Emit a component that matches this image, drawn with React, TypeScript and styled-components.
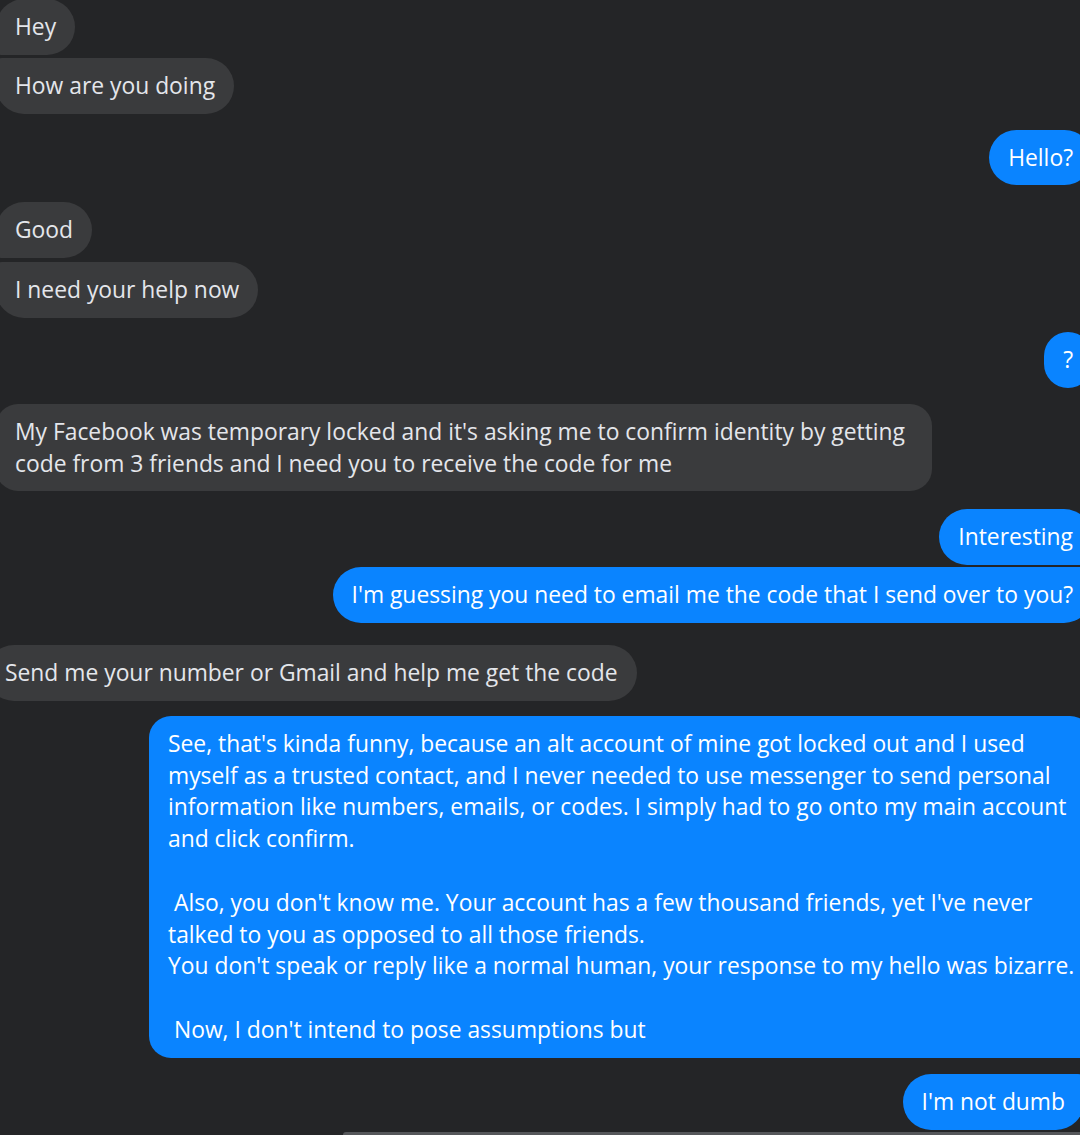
import React from 'react';
import styled, { createGlobalStyle } from 'styled-components';

const GlobalStyle = createGlobalStyle`
  html, body {
    margin: 0;
    padding: 0;
    background: #242527;
  }
  body {
    font-family: "Open Sans", "Noto Sans", sans-serif;
  }
`;

type Side = 'in' | 'out';
type Corner = 'single' | 'first' | 'last';

interface Message {
  side: Side;
  text: string;
  top: number;
  corner?: Corner;
  edge?: number;
  width?: number;
}

const BIG = 22;
const ROUND = 28;
const TIGHT = 6;

const radius = (side: Side, corner: Corner, r: number) => {
  if (corner === 'single') return `${r}px`;
  // tl tr br bl
  if (side === 'in') {
    return corner === 'first'
      ? `${r}px ${r}px ${r}px ${TIGHT}px`
      : `${TIGHT}px ${r}px ${r}px ${r}px`;
  }
  return corner === 'first'
    ? `${r}px ${r}px ${TIGHT}px ${r}px`
    : `${r}px ${TIGHT}px ${r}px ${r}px`;
};

const Page = styled.div`
  width: 1080px;
  height: 1135px;
  overflow: hidden;
  background: #242527;
  display: flex;
  flex-direction: column;
`;

const Thread = styled.div`
  flex: 1;
  display: flex;
  flex-direction: column;
`;

const Row = styled.div<{ $side: Side; $top: number }>`
  display: flex;
  justify-content: ${p => (p.$side === 'in' ? 'flex-start' : 'flex-end')};
  margin-top: ${p => p.$top}px;
`;

const Bubble = styled.div<{ $side: Side; $corner: Corner; $edge: number; $width?: number }>`
  box-sizing: border-box;
  flex-shrink: 0;
  padding: 12px 19px;
  font-size: 22.85px;
  line-height: 31.8px;
  white-space: pre;
  width: ${p => (p.$width ? `${p.$width}px` : 'auto')};
  background: ${p => (p.$side === 'in' ? '#3a3b3d' : '#0a84ff')};
  color: ${p => (p.$side === 'in' ? '#e4e6eb' : '#ffffff')};
  border-radius: ${p => radius(p.$side, p.$corner, p.$width ? BIG : ROUND)};
  margin-left: ${p => (p.$side === 'in' ? `${p.$edge}px` : '0')};
  margin-right: ${p => (p.$side === 'out' ? `${p.$edge}px` : '0')};
`;

const Footer = styled.div`
  height: 5px;
  display: flex;
  align-items: flex-end;
  padding-left: 343px;
`;

const ComposerEdge = styled.div`
  flex: 1;
  height: 3px;
  background: #55575a;
  border-top-left-radius: 3px;
`;

const messages: Message[] = [
  { side: 'in', text: 'Hey', top: -1, corner: 'first' },
  { side: 'in', text: 'How are you doing', top: 3, corner: 'last' },
  { side: 'out', text: 'Hello?', top: 16 },
  { side: 'in', text: 'Good', top: 17, corner: 'first' },
  { side: 'in', text: 'I need your help now', top: 4, corner: 'last' },
  { side: 'out', text: '?', top: 14 },
  {
    side: 'in',
    text:
      "My Facebook was temporary locked and it's asking me to confirm identity by getting\ncode from 3 friends and I need you to receive the code for me",
    top: 16,
    width: 936,
  },
  { side: 'out', text: 'Interesting', top: 18, corner: 'first' },
  { side: 'out', text: "I'm guessing you need to email me the code that I send over to you?", top: 2, corner: 'last' },
  { side: 'in', text: 'Send me your number or Gmail and help me get the code', top: 22, edge: -14 },
  {
    side: 'out',
    text: [
      "See, that's kinda funny, because an alt account of mine got locked out and I used",
      'myself as a trusted contact, and I never needed to use messenger to send personal',
      'information like numbers, emails, or codes. I simply had to go onto my main account',
      'and click confirm.',
      '',
      " Also, you don't know me. Your account has a few thousand friends, yet I've never",
      'talked to you as opposed to all those friends.',
      "You don't speak or reply like a normal human, your response to my hello was bizarre.",
      '',
      " Now, I don't intend to pose assumptions but",
    ].join('\n'),
    top: 15,
    corner: 'first',
    width: 943,
  },
  { side: 'out', text: "I'm not dumb", top: 16, corner: 'last', edge: -4 },
];

export default function App() {
  return (
    <>
      <GlobalStyle />
      <Page>
        <Thread>
          {messages.map((m, i) => (
            <Row key={i} $side={m.side} $top={m.top}>
              <Bubble
                $side={m.side}
                $corner={m.corner ?? 'single'}
                $edge={m.edge ?? (m.side === 'in' ? -4 : -12)}
                $width={m.width}
              >
                {m.text}
              </Bubble>
            </Row>
          ))}
        </Thread>
        <Footer>
          <ComposerEdge />
        </Footer>
      </Page>
    </>
  );
}
